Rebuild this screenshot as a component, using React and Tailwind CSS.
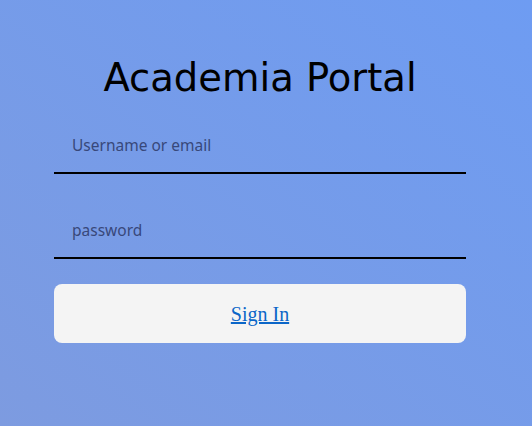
import React from "react";

const App = () => {
  return (
    <div className="min-h-screen w-full bg-[linear-gradient(to_top_right,#7d9be0,#6e9cf2)] pr-[12px] font-['DejaVu_Sans',sans-serif]">
      <div className="mx-auto w-[412px] pt-[52px]">
        {/* TITLE */}
        <h1 className="text-center text-[38.5px] leading-[52px] text-black">Academia Portal</h1>

        {/* FORM */}
        <form className="mt-[18px] flex flex-col" onSubmit={(e) => e.preventDefault()}>
          <input
            type="text"
            placeholder="Username or email"
            className="h-[52px] border-b-2 border-black bg-transparent px-[18px] pb-[5px] font-['Noto_Sans',sans-serif] text-[15.5px] text-[#2d3f6b] outline-none placeholder:text-[#38487a]"
          />
          <input
            type="password"
            placeholder="password"
            className="mt-[33px] h-[52px] border-b-2 border-black bg-transparent px-[18px] pb-[5px] font-['Noto_Sans',sans-serif] text-[15.5px] text-[#2d3f6b] outline-none placeholder:text-[#38487a]"
          />
          <button
            type="submit"
            className="mt-[25px] flex h-[59px] items-center justify-center rounded-lg bg-[#f4f4f4]"
          >
            <a href="#" className="font-['Liberation_Serif',serif] text-[20px] text-[#0b66c8] underline">
              Sign In
            </a>
          </button>
        </form>
      </div>
    </div>
  );
};

export default App;
